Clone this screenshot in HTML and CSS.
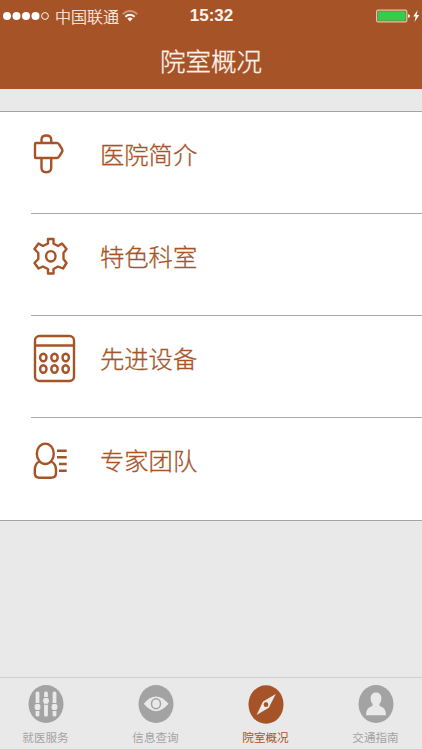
FILE: index.html
```html
<!DOCTYPE html>
<html lang="zh-CN">

<head>
  <meta charset="UTF-8">
  <meta name="viewport" content="width=device-width, initial-scale=1.0">
  <title>院室概况</title>
  <link rel="stylesheet" href="styles.css">
</head>

<body>
  <div class="app">
    <header class="header">
      <div class="status-bar">
        <div class="status-left">
          <svg class="signal" width="46" height="10" viewBox="0 0 46 10">
            <circle cx="4" cy="5" r="4" />
            <circle cx="13.5" cy="5" r="4" />
            <circle cx="23" cy="5" r="4" />
            <circle cx="32.5" cy="5" r="4" />
            <circle class="empty" cx="42" cy="5" r="3.4" />
          </svg>
          <span class="carrier">中国联通</span>
          <svg class="wifi" width="16" height="12" viewBox="0 0 16 12">
            <path class="weak" d="M.7 4.2Q8-2.4 15.3 4.2" />
            <path d="M3.3 6.7Q8 2.7 12.7 6.7" />
            <path class="dot" d="M5.3 8.6Q8 6.4 10.7 8.6L8 11.4Z" />
          </svg>
        </div>
        <span class="time">15:32</span>
        <svg class="battery" width="44" height="14" viewBox="0 0 44 14">
          <rect class="case" x=".6" y="1.1" width="30.2" height="11.8" rx="1.5" />
          <rect class="level" x="1.8" y="2.3" width="27.8" height="9.4" />
          <path class="light" d="M32 5.2Q34 5.4 34 7T32 8.8Z" />
          <path class="light" d="M41.7 1L37.2 7.6H39.7L38.5 13L43.2 6H40.6Z" />
        </svg>
      </div>
      <h1 class="title">院室概况</h1>
    </header>

    <main class="list">
      <a class="item">
        <svg class="icon" width="46" height="50" viewBox="0 0 46 50">
          <path d="M11.5 14V10.5Q11.5 6.5 16.3 6.500T21.2 10.5V14M11.5 29V39Q11.5 43.2 16.3 43.200T21.2 39V29" />
          <path d="M6 14H27Q28.5 14 29.5 16L32 20Q32.8 21.5 32 23L29.5 27Q28.5 29 27 29H6Q5 29 5 28V15Q5 14 6 14Z" />
        </svg>
        <span class="name">医院简介</span>
      </a>
      <a class="item">
        <svg class="icon" width="46" height="50" viewBox="0 0 46 50">
          <path d="M18 8H23.5V12.5L28 15L32 12.5L36.5 18L33.5 22V28L36.5 32L33 37.5L28 35.5L23.5 38V42.5H18V38L13 35.5L8.5 37.5L4.5 32L8.3 28V22L4.5 18L8.5 12.5L13 15L18 12.5Z" />
          <ellipse cx="20.8" cy="25.3" rx="4.7" ry="5.2" />
        </svg>
        <span class="name">特色科室</span>
      </a>
      <a class="item">
        <svg class="icon" width="46" height="50" viewBox="0 0 46 50">
          <rect x="5" y="3" width="39" height="45" rx="4.5" />
          <path d="M5 12.5H44" />
          <ellipse cx="13.3" cy="24.5" rx="3.2" ry="3.7" />
          <ellipse cx="24.5" cy="24.5" rx="3.2" ry="3.7" />
          <ellipse cx="35.7" cy="24.5" rx="3.2" ry="3.7" />
          <ellipse cx="13.3" cy="36" rx="3.2" ry="3.7" />
          <ellipse cx="24.5" cy="36" rx="3.2" ry="3.7" />
          <ellipse cx="35.7" cy="36" rx="3.2" ry="3.7" />
        </svg>
        <span class="name">先进设备</span>
      </a>
      <a class="item">
        <svg class="icon" width="46" height="50" viewBox="0 0 46 50">
          <ellipse cx="15.3" cy="18.8" rx="8.5" ry="10.2" />
          <path d="M9.5 26.5Q4.8 28.5 4.8 35V38Q4.8 42.7 9.5 42.7H21Q26 42.7 26 38V35Q26 28.5 21 26.5" />
          <path d="M27 15.8H36.7M27 22.3H36.7M29 29H36.7M29 35.8H36.7" />
        </svg>
        <span class="name">专家团队</span>
      </a>
    </main>

    <nav class="tabs">
      <a class="tab">
        <svg class="tab-icon" width="36" height="40" viewBox="0 0 36 40">
          <ellipse cx="18" cy="20" rx="17.5" ry="19" />
          <g class="mark">
            <rect x="7.6" y="7.5" width="3.8" height="25" rx="1.5" />
            <rect x="16.1" y="7.5" width="3.8" height="25" rx="1.5" />
            <rect x="24.6" y="7.5" width="3.8" height="25" rx="1.5" />
            <circle cx="9.5" cy="23" r="3" />
            <circle cx="18" cy="16.8" r="3" />
            <circle cx="26.5" cy="23" r="3" />
          </g>
          <path class="groove" d="M7 19.5H12M7 26.5H12M15.5 13.5H20.5M15.5 20.3H20.5M24 19.5H29M24 26.5H29" />
        </svg>
        <span class="label">就医服务</span>
      </a>
      <a class="tab">
        <svg class="tab-icon" width="36" height="40" viewBox="0 0 36 40">
          <ellipse cx="18" cy="20" rx="17.5" ry="19" />
          <path class="mark" d="M5.7 19.8Q18 5 30.5 19.8Q18 34.5 5.7 19.8Z" />
          <ellipse class="pupil" cx="18" cy="19.8" rx="4.5" ry="5" />
        </svg>
        <span class="label">信息查询</span>
      </a>
      <a class="tab active">
        <svg class="tab-icon" width="36" height="40" viewBox="0 0 36 40">
          <ellipse cx="18" cy="20.5" rx="17.5" ry="19.3" />
          <path class="mark" d="M27.8 10L20.8 23.8L8.6 31L15 17.5Z" />
          <ellipse cx="18" cy="20.5" rx="2.3" ry="2.5" />
        </svg>
        <span class="label">院室概况</span>
      </a>
      <a class="tab">
        <svg class="tab-icon" width="36" height="40" viewBox="0 0 36 40">
          <ellipse cx="18" cy="20" rx="17.5" ry="19" />
          <path class="mark" d="M18 8.5C21.5 8.5 23.4 11 23.4 14.2C23.4 17 22.5 18.5 21.3 20C21.3 22 22 22.3 24 23Q28 25 28 31.3H8Q8 25 12 23C14 22.3 14.7 22 14.7 20C13.5 18.5 12.6 17 12.6 14.2C12.6 11 14.5 8.5 18 8.5Z" />
        </svg>
        <span class="label">交通指南</span>
      </a>
    </nav>
  </div>
</body>

</html>
```

FILE: styles.css
```css
* {
  box-sizing: border-box;
}

body {
  margin: 0;
  font-family: "Liberation Sans", "Noto Sans CJK SC", sans-serif;
}

.app {
  display: flex;
  flex-direction: column;
  height: 750px;
  background-color: #e9e9e9;
}

/* Header */
.header {
  height: 89px;
  background-color: #a75328;
  color: #fff3ec;
}

.status-bar {
  display: grid;
  grid-template-columns: 1fr auto 1fr;
  align-items: center;
  height: 32px;
  padding: 0 2px 0 3px;
}

.status-left {
  display: flex;
  align-items: center;
}

.signal {
  fill: #fff;
}

.signal .empty {
  fill: none;
  stroke: #fff3ec;
}

.carrier {
  margin-left: 6px;
  font-family: "Noto Sans CJK SC", sans-serif;
  font-size: 16px;
  font-weight: 300;
  line-height: 32px;
  -webkit-text-stroke: 0.2px;
}

.wifi {
  margin-left: 3px;
  fill: none;
  stroke: #fff;
  stroke-width: 1.8;
}

.wifi .weak {
  stroke: #d29a7c;
}

.wifi .dot {
  fill: #fff;
  stroke: none;
}

.time {
  font-size: 17px;
  font-weight: bold;
}

.battery {
  justify-self: end;
}

.battery .case {
  fill: none;
  stroke: #e5c3ac;
  stroke-width: 1.2;
}

.battery .level {
  fill: #35cb4b;
}

.battery .light {
  fill: #fff;
}

.title {
  margin: 0;
  font-family: "Noto Sans CJK SC", sans-serif;
  font-size: 25.5px;
  font-weight: 300;
  line-height: 55px;
  text-align: center;
  -webkit-text-stroke: 0.3px;
}

/* List */
.list {
  margin-top: 22px;
  border-top: 1px solid #a3a3a3;
  border-bottom: 1px solid #a3a3a3;
  background-color: #fff;
}

.item {
  display: flex;
  align-items: flex-start;
  height: 102px;
  margin-left: 31px;
  padding-top: 17px;
  border-bottom: 1px solid #aaa;
}

.item:last-child {
  border-bottom: none;
}

.icon {
  margin-left: -1px;
  fill: none;
  stroke: #a75328;
  stroke-width: 2.4;
  stroke-linejoin: round;
}

.name {
  margin-left: 24px;
  color: #a75328;
  font-family: "Noto Sans CJK SC", sans-serif;
  font-size: 24.3px;
  font-weight: 300;
  line-height: 50px;
  -webkit-text-stroke: 0.3px;
}

/* Tab bar */
.tabs {
  display: flex;
  justify-content: space-between;
  height: 73px;
  margin-top: auto;
  padding: 6px 22px 0 21px;
  border-top: 1px solid #d0d0d0;
  border-bottom: 1px solid #d0d0d0;
}

.tab {
  display: flex;
  flex-direction: column;
  align-items: center;
  width: 49px;
  color: #a3a3a3;
}

.tab.active {
  color: #a75328;
}

.tab-icon {
  flex-shrink: 0;
  fill: currentColor;
}

.tab-icon .mark {
  fill: #e9e9e9;
}

.tab-icon .groove {
  stroke: currentColor;
}

.tab-icon .pupil {
  fill: none;
  stroke: currentColor;
  stroke-width: 1.5;
}

.label {
  font-family: "Noto Sans CJK SC", sans-serif;
  font-size: 11.6px;
  line-height: 26px;
  white-space: nowrap;
}
```
